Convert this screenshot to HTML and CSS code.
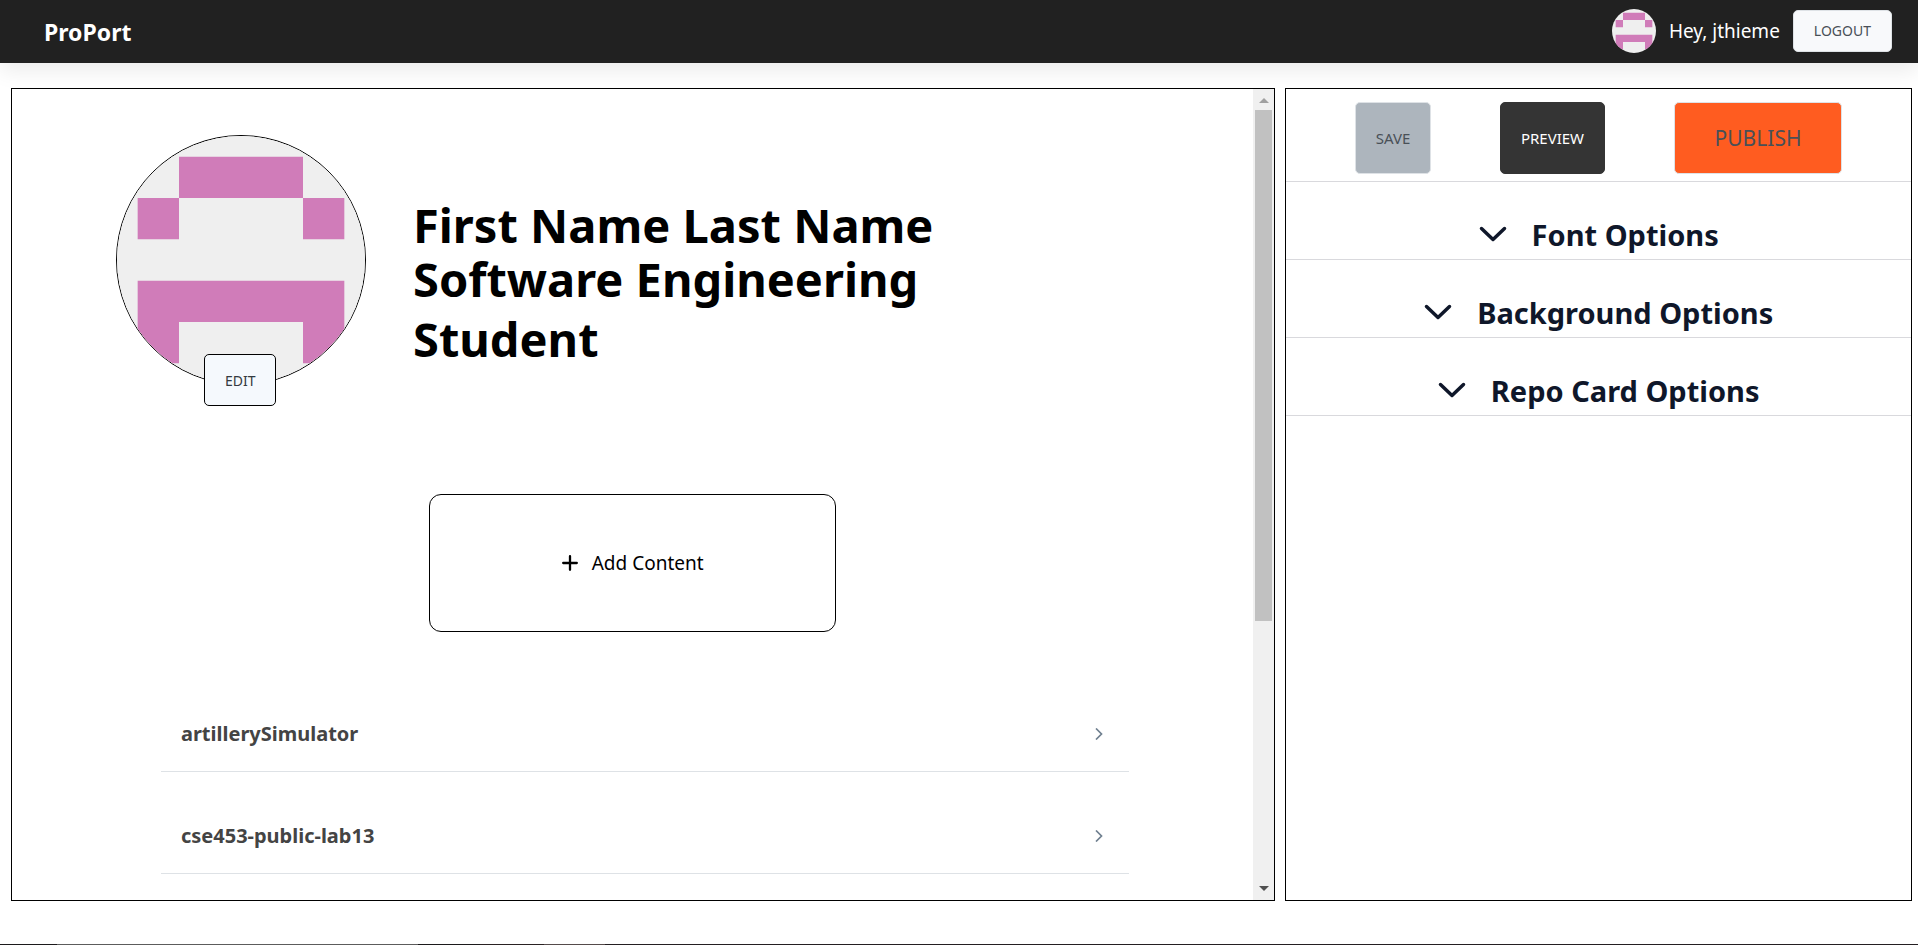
FILE: index.html
```html
<!DOCTYPE html>
<html lang="en">
<head>
<meta charset="utf-8">
<meta name="viewport" content="width=device-width, initial-scale=1">
<title>ProPort</title>
<link rel="stylesheet" href="styles.css">
</head>
<body>
<svg class="defs" aria-hidden="true">
  <symbol id="identicon" viewBox="0 0 420 420">
    <rect width="420" height="420" fill="#efefef"/>
    <path fill="#d07cb9" d="M105 35h210v70H105zM35 105h70v70H35zM315 105h70v70h-70zM35 245h350v140h-70v-70H105v70H35z"/>
  </symbol>
  <symbol id="chevron-down" viewBox="0 0 28 16">
    <path d="M2.500 2.500l11.500 11 11.500-11" fill="none" stroke="currentColor" stroke-width="3.500" stroke-linecap="round" stroke-linejoin="round"/>
  </symbol>
  <symbol id="chevron-right" viewBox="0 0 8 12">
    <path d="M1 .5L6.500 6 1 11.500" fill="none" stroke="currentColor" stroke-width="1.700"/>
  </symbol>
</svg>

<header class="topbar">
  <a class="brand" href="#">ProPort</a>
  <div class="account">
    <svg class="account-avatar" role="img" aria-label="jthieme"><use href="#identicon"/></svg>
    <span class="greeting">Hey, jthieme</span>
    <button class="btn btn-logout" type="button">LOGOUT</button>
  </div>
</header>

<main class="workspace">
  <section class="panel editor">
    <div class="canvas">
      <div class="profile">
        <div class="portrait">
          <svg class="portrait-image" role="img" aria-label="Profile picture"><use href="#identicon"/></svg>
          <button class="btn btn-edit" type="button">EDIT</button>
        </div>
        <div class="headline">
          <h1 class="name">First Name Last Name</h1>
          <h2 class="role">Software Engineering Student</h2>
        </div>
      </div>
      <button class="add-content" type="button">
        <svg class="plus" viewBox="0 0 16 16" aria-hidden="true"><path d="M8 1.200v13.600M1.200 8h13.600" stroke="currentColor" stroke-width="2.300" stroke-linecap="round"/></svg>
        Add Content
      </button>
      <ul class="repos">
        <li><a class="repo" href="#">artillerySimulator<svg class="repo-arrow" aria-hidden="true"><use href="#chevron-right"/></svg></a></li>
        <li><a class="repo" href="#">cse453-public-lab13<svg class="repo-arrow" aria-hidden="true"><use href="#chevron-right"/></svg></a></li>
      </ul>
    </div>
    <div class="scrollbar" aria-hidden="true">
      <svg class="scroll-arrow scroll-up" viewBox="0 0 10 5"><path d="M0 5l5-5 5 5z"/></svg>
      <div class="track"><div class="thumb"></div></div>
      <svg class="scroll-arrow scroll-down" viewBox="0 0 10 5"><path d="M0 0l5 5 5-5z"/></svg>
    </div>
  </section>

  <aside class="panel options">
    <div class="actions">
      <button class="btn btn-save" type="button">SAVE</button>
      <button class="btn btn-preview" type="button">PREVIEW</button>
      <button class="btn btn-publish" type="button">PUBLISH</button>
    </div>
    <button class="option" type="button"><svg class="option-icon" aria-hidden="true"><use href="#chevron-down"/></svg>Font Options</button>
    <button class="option" type="button"><svg class="option-icon" aria-hidden="true"><use href="#chevron-down"/></svg>Background Options</button>
    <button class="option" type="button"><svg class="option-icon" aria-hidden="true"><use href="#chevron-down"/></svg>Repo Card Options</button>
  </aside>
</main>
<footer class="footer-edge"></footer>
</body>
</html>
```
FILE: styles.css
```css
* { box-sizing: border-box; }

body {
  margin: 0;
  height: 100vh;
  display: flex;
  flex-direction: column;
  overflow: hidden;
  background: #fff;
  color: #000;
  font-family: "Noto Sans", "Open Sans", sans-serif;
}

button { font: inherit; cursor: pointer; }
a { color: inherit; text-decoration: none; }
h1, h2 { margin: 0; }
.defs { position: absolute; width: 0; height: 0; }

.topbar {
  flex: none;
  display: flex;
  align-items: center;
  justify-content: space-between;
  height: 63px;
  padding: 0 26px 0 44px;
  background: #212121;
  color: #fff;
  box-shadow: 0 8px 20px rgba(0, 0, 0, 0.08);
}
.brand { font-size: 23px; font-weight: 700; }
.account { display: flex; align-items: center; gap: 13px; padding-bottom: 2px; }
.account-avatar { width: 44px; height: 44px; border-radius: 50%; }
.greeting { font-size: 19px; }

.btn {
  padding: 0 20px;
  border: 1px solid #dee2e6;
  border-radius: 5px;
  background: #f8f9fb;
  color: #495057;
  font-size: 14px;
}
.btn-logout { height: 42px; }

.workspace {
  flex: 1;
  min-height: 0;
  display: grid;
  grid-template-columns: 1265fr 627fr;
  gap: 10px;
  padding: 25px 6px 43px 11px;
}
.panel { min-width: 0; border: 1px solid #000; }
.editor { display: flex; min-height: 0; }
.canvas { flex: 1; min-width: 0; overflow: hidden; }

.profile { display: flex; gap: 47px; padding: 46px 104px 0; }
.portrait { position: relative; flex: none; width: 250px; height: 250px; }
.portrait-image {
  display: block;
  width: 100%;
  height: 100%;
  border: 1px solid #000;
  border-radius: 50%;
}
.btn-edit {
  position: absolute;
  left: 88px;
  bottom: -21px;
  width: 72px;
  height: 52px;
  border-color: #000;
  background: #f5f9fd;
  color: #343a40;
}
.headline { max-width: 560px; padding-top: 66px; }
.name, .role { font-size: 47px; font-weight: 700; }
.name { line-height: 48px; }
.role { line-height: 60px; }

.add-content {
  display: flex;
  align-items: center;
  justify-content: center;
  gap: 14px;
  width: 407px;
  height: 138px;
  margin: 109px auto 0;
  border: 1px solid #000;
  border-radius: 12px;
  background: #fff;
  color: #000;
  font-size: 19px;
}
.plus { width: 16px; height: 16px; }

.repos { width: 78%; margin: 38px 0 0 12%; padding: 0; list-style: none; }
.repo {
  display: flex;
  align-items: center;
  justify-content: space-between;
  height: 102px;
  padding: 26px 26px 0 20px;
  border-bottom: 1px solid #dee2e6;
  color: #444;
  font-size: 20px;
  font-weight: 700;
}
.repo-arrow { width: 8px; height: 12px; color: #708090; }

.scrollbar {
  flex: none;
  display: flex;
  flex-direction: column;
  align-items: center;
  width: 21px;
  padding: 9px 0;
  background: #f0f0f0;
}
.scroll-arrow { flex: none; width: 10px; height: 5px; }
.scroll-up { fill: #a0a0a0; }
.scroll-down { fill: #505050; }
.track { flex: 1; width: 17px; padding: 7px 0; }
.thumb { height: 66.5%; background: #c1c1c1; }

.actions {
  display: flex;
  align-items: center;
  justify-content: space-evenly;
  height: 93px;
  padding-top: 6px;
  border-bottom: 1px solid #d9d9dd;
}
.actions .btn { height: 72px; }
.btn-save, .btn-preview { font-size: 15px; }
.btn-save { background: #adb5bd; }
.btn-preview { border-color: #343434; background: #343434; color: #fff; }
.btn-publish { padding: 0 40px; background: #ff5c20; font-size: 21px; }

.option {
  display: flex;
  align-items: center;
  justify-content: center;
  gap: 25px;
  width: 100%;
  height: 78px;
  padding: 27px 0 0;
  border: 0;
  border-bottom: 1px solid #d9d9dd;
  background: none;
  color: #0f172a;
  font-size: 29px;
  font-weight: 700;
}
.option-icon { width: 28px; height: 16px; }

.footer-edge {
  flex: none;
  height: 1px;
  background: linear-gradient(90deg, #1c1a1c 57px, #5c5c5c 57px 418px, #1c1a1c 418px 480px, #2a2223 480px 544px, #554b4b 544px 605px, #241f22 605px);
}
```
